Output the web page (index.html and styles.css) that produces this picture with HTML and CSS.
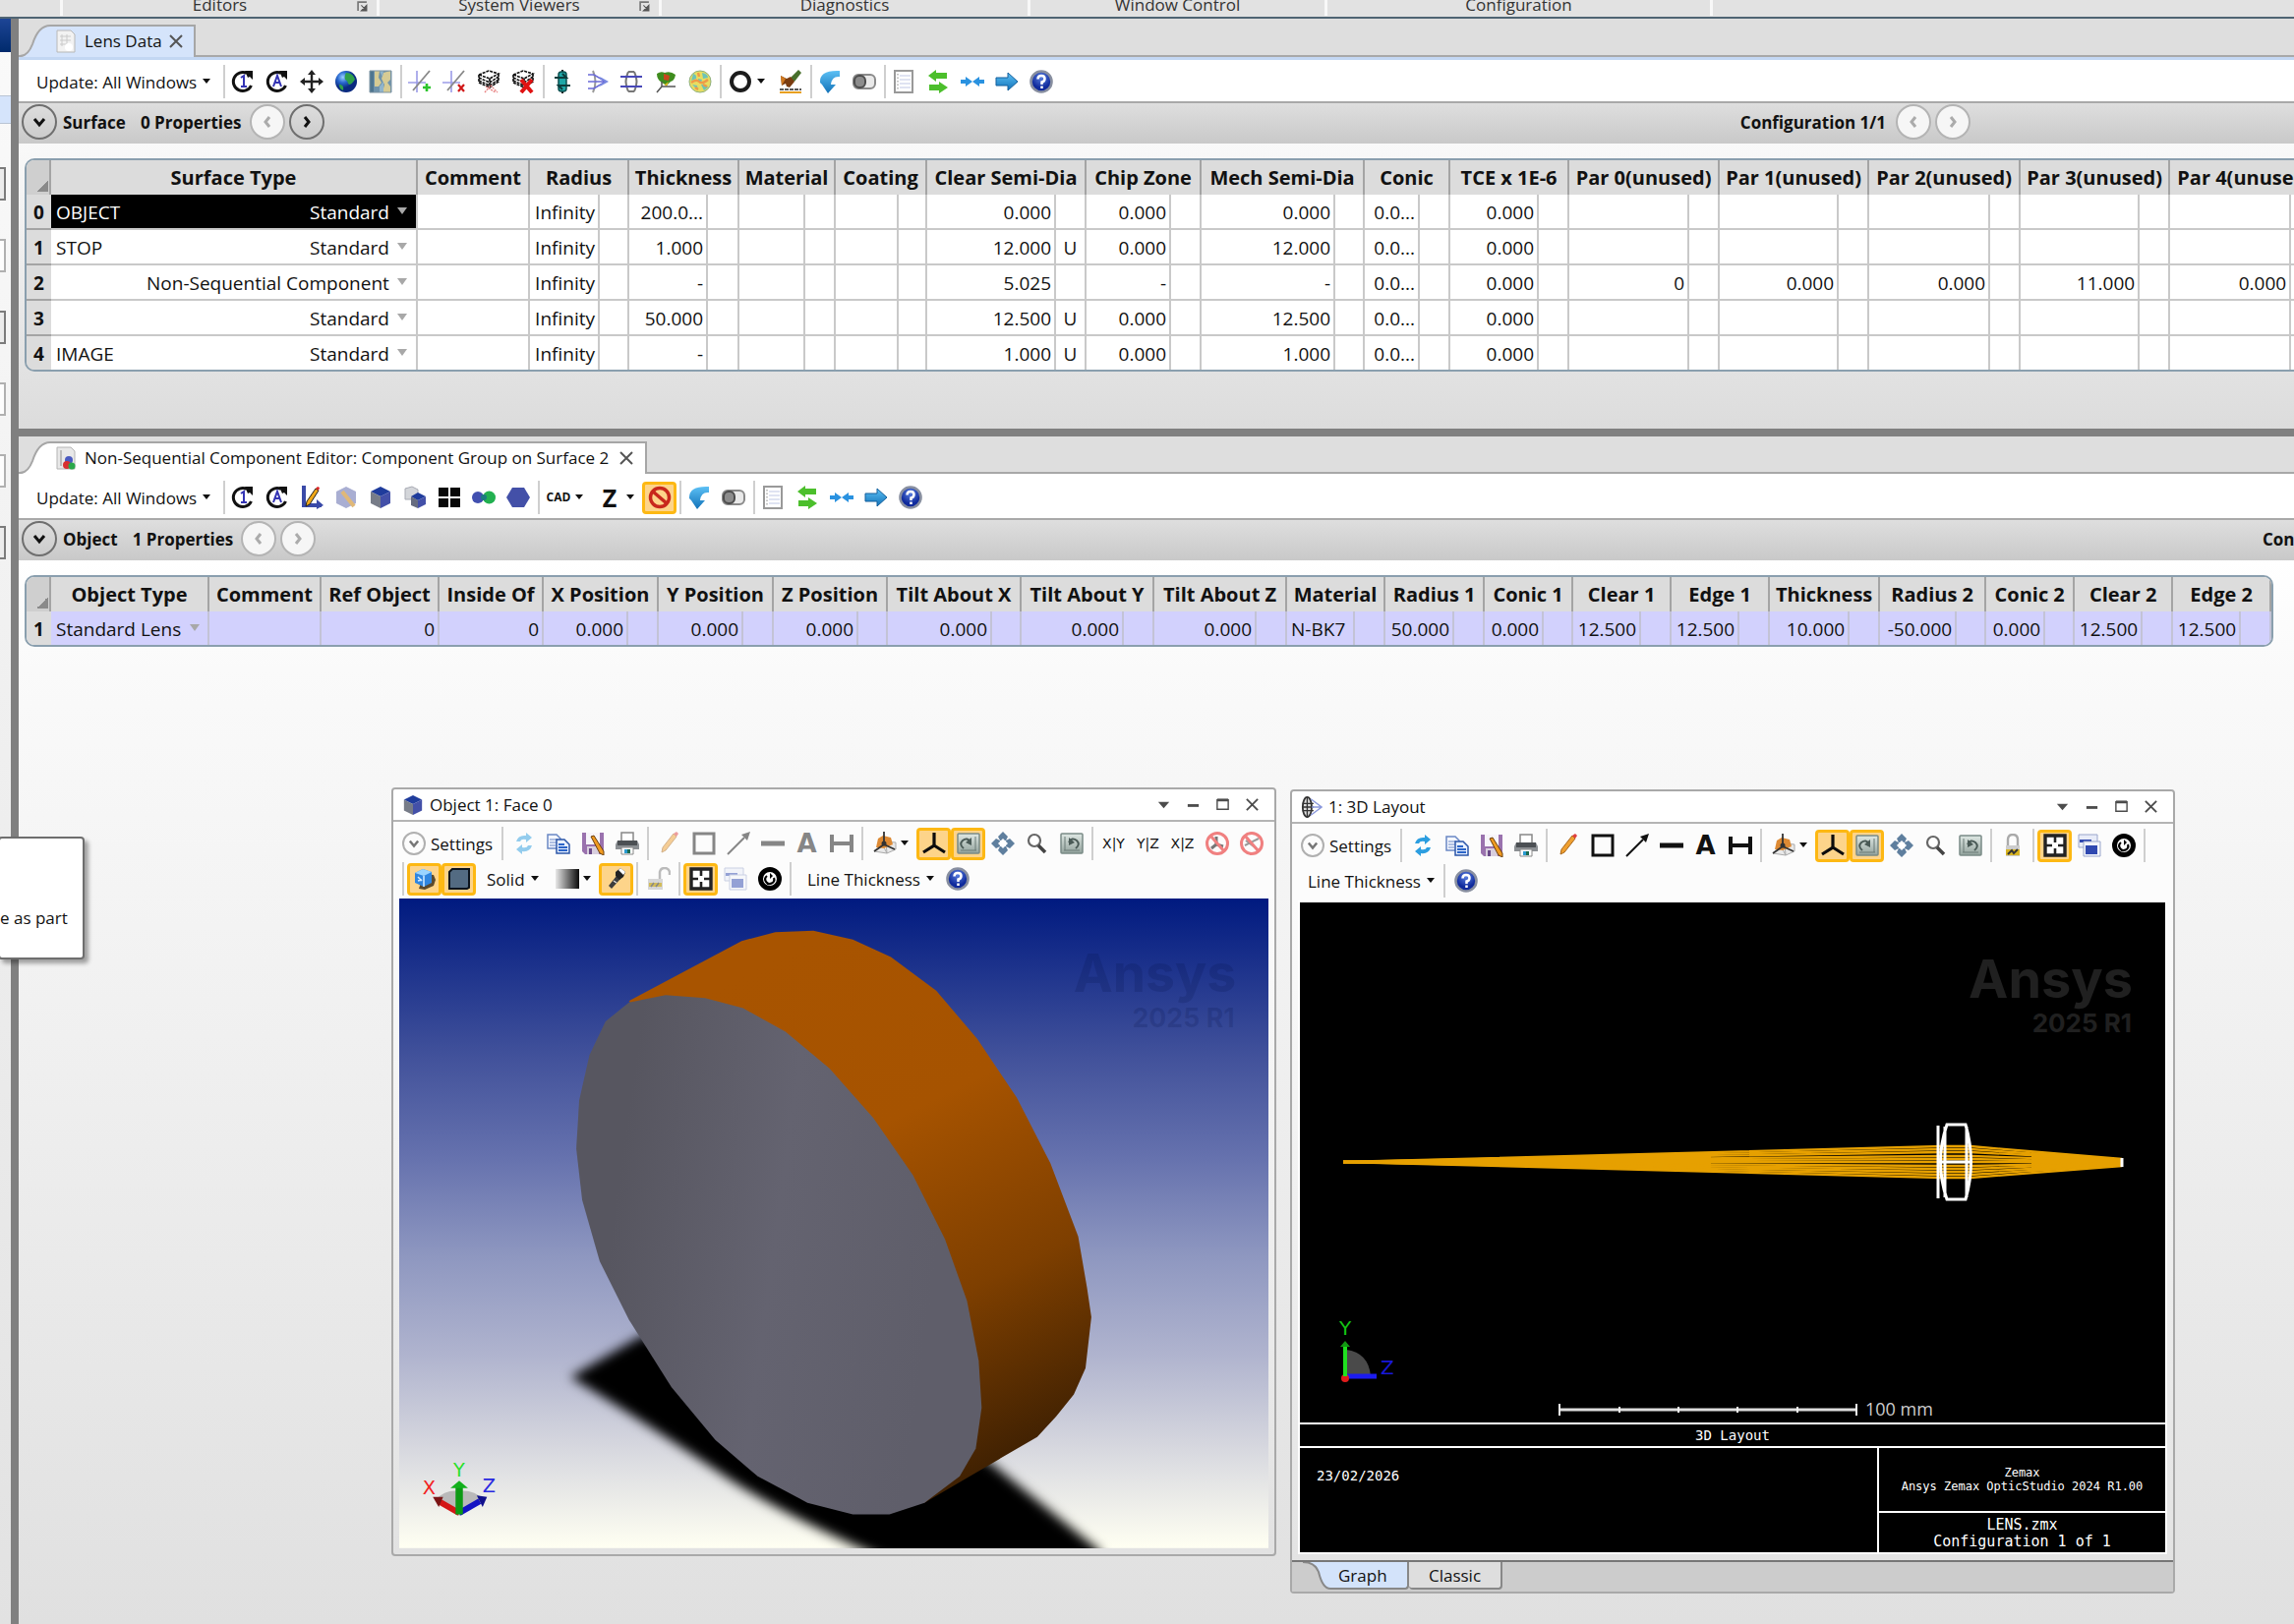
FILE: index.html
```html
<!DOCTYPE html>
<html lang="en">
<head>
<meta charset="utf-8">
<title>Lens Data</title>
<link rel="stylesheet" href="styles.css">
</head>
<body>
<svg class="defs" aria-hidden="true">
  <defs>
    <linearGradient id="g-blue" x1="0" y1="0" x2="0" y2="1"><stop offset="0" stop-color="#5cc0f5"/><stop offset="1" stop-color="#1272b8"/></linearGradient>
    <linearGradient id="g-bw"><stop offset="0" stop-color="#e8e8e8"/><stop offset="1" stop-color="#0a0a0a"/></linearGradient>
    <radialGradient id="g-globe" cx=".35" cy=".3"><stop offset="0" stop-color="#9ad0ff"/><stop offset=".5" stop-color="#2a6ad0"/><stop offset="1" stop-color="#0a2a80"/></radialGradient>
    <radialGradient id="g-help" cx=".5" cy=".3"><stop offset="0" stop-color="#5a80e0"/><stop offset="1" stop-color="#0f2a9c"/></radialGradient>
    <linearGradient id="g-screen" x1="0" y1="0" x2="0" y2="1"><stop offset="0" stop-color="#dfe8e4"/><stop offset="1" stop-color="#93a39d"/></linearGradient>
    <symbol id="update-one" viewBox="0 0 24 24"><path d="M16 3.500A9.500 9.500 0 1 0 20.500 16" fill="none" stroke="#111" stroke-width="3"/><path d="M14 1h8v9l-3-3-2 1z" fill="#111"/><path d="M10 8l3-2v11M10 17h6" fill="none" stroke="#3434b4" stroke-width="2"/></symbol>
    <symbol id="update-all" viewBox="0 0 24 24"><path d="M16 3.500A9.500 9.500 0 1 0 20.500 16" fill="none" stroke="#111" stroke-width="3"/><path d="M14 1h8v9l-3-3-2 1z" fill="#111"/><path d="M8 17l4-11 4 11M9.500 13h5" fill="none" stroke="#3434b4" stroke-width="2"/></symbol>
    <symbol id="move" viewBox="0 0 24 24"><path d="M12 2v20M2 12h20" stroke="#222" stroke-width="2.400"/><path d="M12 0l4 5H8zM12 24l4-5H8zM0 12l5-4v8zM24 12l-5-4v8z" fill="#222"/></symbol>
    <symbol id="globe" viewBox="0 0 24 24"><circle cx="12" cy="12" r="11" fill="url(#g-globe)"/><path d="M12 3c5 0 8 3 9 7-2 2-3 5-6 5-2-2-1-4-4-5-1-3 0-5 1-7zM5 15c3 0 5 2 4 6-3-1-4-3-4-6z" fill="#2fa04a"/></symbol>
    <symbol id="map" viewBox="0 0 24 24"><path d="M1 1h22v22H1z" fill="#6f93ac"/><path d="M1 1h4v22H1z" fill="#4f7690"/><path d="M6 1h5l-1 7 3 5-3 4H6zM15 3l7-2v9l-3 3 3 4v6h-8l2-8-3-6z" fill="#d6cb94"/><path d="M11 1h4l-1 6zM11 17l4-5v11h-4z" fill="#8fb4cc"/><path d="M1 1h22v22H1z" fill="none" stroke="#7d93a2"/></symbol>
    <symbol id="ray-add" viewBox="0 0 24 24"><path d="M0 13h18M9 1v22" stroke="#9c9ce8" stroke-width="1.600"/><path d="M22 1L5 21" stroke="#888" stroke-width="1.800"/><path d="M19 14v8M15 18h8" stroke="#2cc42c" stroke-width="2.600"/></symbol>
    <symbol id="ray-remove" viewBox="0 0 24 24"><path d="M0 13h18M9 1v22" stroke="#9c9ce8" stroke-width="1.600"/><path d="M22 1L5 21" stroke="#888" stroke-width="1.800"/><path d="M16 15l6 7M22 15l-6 7" stroke="#d01818" stroke-width="2.200"/></symbol>
    <symbol id="stack" viewBox="0 0 24 24"><path d="M2 5l10-4 10 3-9 5zM2 5v8l11 5 9-6V4M2 8l11 5 9-6M2 11l11 5 9-6M13 9v9" fill="#fff" stroke="#111" stroke-width="1.600" stroke-dasharray="3 1"/><path d="M8 23l6-7 7 7M9 17l10 6" fill="none" stroke="#e88080" stroke-width="1.300" stroke-dasharray="2 1"/></symbol>
    <symbol id="stack-del" viewBox="0 0 24 24"><path d="M2 5l10-4 10 3-9 5zM2 5v8l11 5 9-6V4M2 8l11 5 9-6M2 11l11 5 9-6M13 9v9" fill="#fff" stroke="#111" stroke-width="1.600" stroke-dasharray="3 1"/><path d="M10 10l11 13M21 10L10 23" stroke="#e01212" stroke-width="4"/></symbol>
    <symbol id="flip" viewBox="0 0 24 24"><path d="M12 0v24" stroke="#111" stroke-width="2"/><rect x="8" y="2" width="8" height="20" rx="3" fill="#1ea6a6" stroke="#0b4f4f" stroke-width="1.500"/><path d="M4 8h12l-4-4M20 16H8l4 4" fill="none" stroke="#0b3c3c" stroke-width="2"/></symbol>
    <symbol id="lens-one" viewBox="0 0 24 24"><path d="M8 1q5 11 0 22" fill="none" stroke="#999" stroke-width="2"/><path d="M3 5h6l12 7-12 7H3M3 12h18" fill="none" stroke="#6a6ad8" stroke-width="1.600"/><path d="M15 8l7 4-7 4" fill="none" stroke="#7a8ae0" stroke-width="2"/></symbol>
    <symbol id="lens-two" viewBox="0 0 24 24"><path d="M9 2q-5 10 0 20M15 2q5 10 0 20M9 2h6M9 22h6" fill="none" stroke="#777" stroke-width="2"/><path d="M1 7h22M1 17h22" stroke="#4848b8" stroke-width="1.800"/></symbol>
    <symbol id="terrain" viewBox="0 0 24 24"><path d="M3 4q4-3 8-1 6-2 11 2-1 6-5 7l-4 4-5-3q-5-3-5-9z" fill="#3f8c1e"/><path d="M10 4l6 2-1 5-5-1z" fill="#c8461c"/><path d="M7 12l4 3 4-3-2 5z" fill="#e0b820"/><path d="M3 23l5-6h14M8 12v5" fill="none" stroke="#555" stroke-width="1.500"/></symbol>
    <symbol id="heat" viewBox="0 0 24 24"><circle cx="12" cy="12" r="11" fill="#e8dd60" stroke="#8fb080"/><path d="M5 4q4 1 3 5l-5 2zM14 3q6 1 6 5l-5 1zM13 15q5-1 7 3l-4 3zM4 15l5 1 1 5zM10 9l4 1-1 3-3-1z" fill="#6cc4b8"/><path d="M3 13q5-4 8-1t9-2M10 3l1 4M15 15l4 2M7 18l3 2" fill="none" stroke="#ee9a48" stroke-width="2.400"/></symbol>
    <symbol id="ring" viewBox="0 0 24 24"><circle cx="12" cy="12" r="9" fill="none" stroke="#1c1c1c" stroke-width="4"/></symbol>
    <symbol id="brush" viewBox="0 0 24 24"><path d="M20 0l3 3-7 9-5-3z" fill="#48702c"/><path d="M2 6l6 3 4-2 4 5-5 6-3-1-1-3-4 2z" fill="#7a3c10"/><path d="M2 6l5 3-4 7z" fill="#d07a20"/><path d="M1 20h22" stroke="#222" stroke-width="1.500" stroke-dasharray="4 1"/><path d="M1 23h22" stroke="#e8a020" stroke-width="2"/></symbol>
    <symbol id="undo" viewBox="0 0 24 24"><path d="M22 1v6Q14 6 13 15h5l-8 9-6-9-2-2q-1-13 20-12z" fill="url(#g-blue)"/></symbol>
    <symbol id="toggle" viewBox="0 0 24 24"><rect x="1" y="5" width="22" height="14" rx="5" fill="#e9e9e9" stroke="#8a8a8a" stroke-width="2"/><rect x="2" y="6" width="11" height="12" rx="5" fill="#8c8c8c" stroke="#4c4c4c" stroke-width="2"/></symbol>
    <symbol id="sheet" viewBox="0 0 24 24"><path d="M3 1h18v22H3z" fill="#fff" stroke="#999" stroke-width="2"/><path d="M8 6h11M8 10h11M8 14h11M8 18h11" stroke="#d5daee" stroke-width="1.500"/><path d="M6 4v17" stroke="#888" stroke-dasharray="1.500 2"/></symbol>
    <symbol id="swap" viewBox="0 0 24 24"><path d="M10 0v3h11v6H10v3L2 6zM13 12v3H3v6h10v3l9-6z" fill="#4cbf2c"/></symbol>
    <symbol id="narrow" viewBox="0 0 24 24"><path d="M0 10h5V7l7 5-7 5v-3H0zM24 10h-5V7l-7 5 7 5v-3h5z" fill="#2a92e0"/></symbol>
    <symbol id="next" viewBox="0 0 24 24"><path d="M1 8h12V3l10 9-10 9v-5H1z" fill="url(#g-blue)" stroke="#125f9c"/></symbol>
    <symbol id="help" viewBox="0 0 24 24"><circle cx="12" cy="12" r="10.500" fill="url(#g-help)" stroke="#888fa0" stroke-width="2.600"/><path d="M8.500 9.500q0-3.500 3.500-3.500t3.500 3-3 3.500v2.500M12.500 16.500v2.500" fill="none" stroke="#fff" stroke-width="2.500"/></symbol>
    <symbol id="axis-edit" viewBox="0 0 24 24"><path d="M4 0v20h18" fill="none" stroke="#3a4aa8" stroke-width="4"/><path d="M17 14l7 6-7 4z" fill="#3a4aa8"/><path d="M16 3l3 2-9 14-4 2 1-5z" fill="#f0a818" stroke="#222"/><path d="M16 3l3 2 1-3-2-1z" fill="#d22"/></symbol>
    <symbol id="hex-edit" viewBox="0 0 24 24"><path d="M12 1l10 5v12l-10 5-10-5V6z" fill="#a9aed2"/><path d="M8 6l12 15" stroke="#e0b878" stroke-width="4"/></symbol>
    <symbol id="cube" viewBox="0 0 24 24"><path d="M12 1l10 5-10 5L2 6z" fill="#1f3c9c"/><path d="M2 6l10 5v12L2 18z" fill="#777c88"/><path d="M22 6l-10 5v12l10-5z" fill="#4350a8"/></symbol>
    <symbol id="cube-copy" viewBox="0 0 24 24"><path d="M2 3l7-2 6 3v10H2z" fill="#d4d6da" stroke="#a8abb4"/><path d="M15 7l8 4-8 4-7-4z" fill="#1f3c9c"/><path d="M8 11l7 4v8l-7-3z" fill="#666c80"/><path d="M23 11l-8 4v8l8-4z" fill="#4350a8"/></symbol>
    <symbol id="four" viewBox="0 0 24 24"><path d="M1 2h10v9H1zM13 2h10v9H13zM1 13h10v9H1zM13 13h10v9H13z" fill="#080808"/></symbol>
    <symbol id="two-dots" viewBox="0 0 24 24"><circle cx="6" cy="12" r="6" fill="#4150b0"/><circle cx="17.500" cy="12" r="6.500" fill="#22b050"/><circle cx="12" cy="12" r="3" fill="#1c7a80"/></symbol>
    <symbol id="hexagon" viewBox="0 0 24 24"><path d="M6 2h12l6 10-6 10H6L0 12z" fill="#4350a8"/></symbol>
    <symbol id="forbid" viewBox="0 0 24 24"><circle cx="12" cy="12" r="9.500" fill="none" stroke="#c8281c" stroke-width="3.500"/><path d="M5 6l14 12" stroke="#c8281c" stroke-width="3.500"/></symbol>
    <symbol id="refresh" viewBox="0 0 24 24"><path d="M4 10Q6 3 14 4V1l6 5-6 5V8q-5-1-6 2zM20 14q-2 7-10 6v3l-6-5 6-5v3q5 1 6-2z" fill="#2c9ee0"/></symbol>
    <symbol id="copy" viewBox="0 0 24 24"><path d="M1 3h9l4 4v10H1z" fill="#f4f7ff" stroke="#6a88c4" stroke-width="1.500"/><path d="M3 8h8M3 11h8M3 14h6" stroke="#6a88c4"/><path d="M10 8h8l5 5v9H10z" fill="#e8f0ff" stroke="#2b55a8" stroke-width="1.500"/><path d="M12 13h6M12 16h9M12 19h9" stroke="#2b65c8" stroke-width="1.800"/></symbol>
    <symbol id="save" viewBox="0 0 24 24"><path d="M1 1h22v22H4l-3-3z" fill="#9a72ae"/><path d="M5 1h14v12H5z" fill="#f7f5fa"/><path d="M6 15h12v8H6z" fill="#d8cede"/><path d="M8 17h3v6H8z" fill="#6a4a88"/><path d="M10 5l3-1 10 16v4l-4-2z" fill="#f09a20" stroke="#6a4010"/></symbol>
    <symbol id="print" viewBox="0 0 24 24"><path d="M6 1h12v9H6z" fill="#fff" stroke="#888" stroke-width="1.500"/><path d="M2 9h20l2 4v5H0v-5z" fill="#8c9094"/><path d="M2 9h20v5H2z" fill="#4c5054"/><path d="M6 16h12v7H6z" fill="#fff" stroke="#888"/><path d="M9 18h3v4H9z" fill="#2a9ad0"/><path d="M12 18h3v4h-3z" fill="#1c6a50"/></symbol>
    <symbol id="pencil" viewBox="0 0 24 24"><path d="M16 2l3 3L8 19l-4 2 1-5z" fill="#f0a030" stroke="#a8671c"/><path d="M16 2l3 3 2-3-2-2z" fill="#e04040"/></symbol>
    <symbol id="rect" viewBox="0 0 24 24"><path d="M2 2h20v20H2z" fill="none" stroke="currentColor" stroke-width="3"/></symbol>
    <symbol id="arrow" viewBox="0 0 24 24"><path d="M1 23L18 6" stroke="currentColor" stroke-width="2"/><path d="M24 0l-3 9-6-6z" fill="currentColor"/></symbol>
    <symbol id="line" viewBox="0 0 24 24"><path d="M0 12h24" stroke="currentColor" stroke-width="5"/></symbol>
    <symbol id="span" viewBox="0 0 24 24"><path d="M2 3v18M22 3v18M2 12h20" fill="none" stroke="currentColor" stroke-width="4"/></symbol>
    <symbol id="planes" viewBox="0 0 24 24"><path d="M1 20l9-6 4 8zM13 10l10 1v7l-9 4z" fill="#e9e9e9" stroke="#aaa"/><path d="M5 7l5-3 8 2 2 7-9 4-8-1z" fill="#dd8a34"/><path d="M11 0v13L1 20M11 13l11 5" fill="none" stroke="#333" stroke-width="1.800"/><circle cx="11" cy="12" r="2.500" fill="#333"/></symbol>
    <symbol id="tripod" viewBox="0 0 24 24"><path d="M12 1v13L1 21M12 14l11 7" fill="none" stroke="#0c0c0c" stroke-width="3.200"/></symbol>
    <symbol id="rotate" viewBox="0 0 24 24"><rect x="1" y="2" width="22" height="20" rx="1" fill="url(#g-screen)" stroke="#7a8a86" stroke-width="1.500"/><path d="M7 17Q2 13 6 9q5-4 8 2" fill="none" stroke="#4a5a56" stroke-width="2"/><path d="M15 6v8l-6-3z" fill="#4a5a56"/><path d="M19 5v14M4 19h16" fill="none" stroke="#6a7a76"/></symbol>
    <symbol id="reset" viewBox="0 0 24 24"><rect x="1" y="2" width="22" height="20" rx="1" fill="url(#g-screen)" stroke="#7a8a86" stroke-width="1.500"/><path d="M16 17q5-4 1-8-5-4-8 2" fill="none" stroke="#4a5a56" stroke-width="2"/><path d="M9 6v8l6-3z" fill="#4a5a56"/><path d="M5 5v14M4 19h16" fill="none" stroke="#6a7a76"/></symbol>
    <symbol id="pan" viewBox="0 0 24 24"><path d="M12 0l5 5-2 4H9L7 5zM12 24l5-5-2-4H9l-2 4zM0 12l5-5 4 2v6l-4 2zM24 12l-5-5-4 2v6l4 2z" fill="#5f7f9e"/><path d="M12 7l5 5-5 5-5-5z" fill="#fff"/></symbol>
    <symbol id="magnify" viewBox="0 0 24 24"><circle cx="9" cy="9" r="6" fill="#fff" stroke="#666" stroke-width="2.200"/><path d="M13 14l7 7" stroke="#444" stroke-width="3.600"/></symbol>
    <symbol id="no-axis" viewBox="0 0 24 24"><path d="M11 5v8l-5 4M11 13l7 2" fill="none" stroke="#777" stroke-width="3"/><circle cx="12" cy="12" r="10.500" fill="none" stroke="#f08080" stroke-width="3"/><path d="M5 4l14 16" stroke="#f08080" stroke-width="3"/></symbol>
    <symbol id="no-ray" viewBox="0 0 24 24"><path d="M5 14l14-7M6 9l12 9" fill="none" stroke="#999" stroke-width="2"/><circle cx="12" cy="12" r="10.500" fill="none" stroke="#f08080" stroke-width="3"/><path d="M5 4l14 16" stroke="#f08080" stroke-width="3"/></symbol>
    <symbol id="box3d" viewBox="0 0 24 24"><path d="M11 7l10 1 2 5-2 6-9 4-6-1z" fill="#5c4a2c"/><path d="M10 2l9 3v11l-8 4-9-4V6z" fill="#2f86e0"/><path d="M10 2l9 3-8 4-9-3z" fill="#9ad4ff"/><path d="M11 9v11M5 10l4 4M5 14l4-1" stroke="#d4ecff" stroke-width="1.500"/></symbol>
    <symbol id="face" viewBox="0 0 24 24"><path d="M5 2h17v19l-2 1H2V5z" fill="#536b82" stroke="#0c141c" stroke-width="2"/></symbol>
    <symbol id="gradient" viewBox="0 0 24 24"><path d="M0 2h24v20H0z" fill="url(#g-bw)"/></symbol>
    <symbol id="torch" viewBox="0 0 24 24"><path d="M12 9l4 3-9 10-3-3z" fill="#3c3c3c"/><path d="M11 5l5-4 5 4-2 5-4 3-4-4z" fill="#222"/><path d="M14 3l2-2 5 4-2 3z" fill="#fff"/><path d="M9 14l3 2" stroke="#ddd" stroke-width="1.500"/></symbol>
    <symbol id="lock-open" viewBox="0 0 24 24"><path d="M13 12V5q1-4 5-4t5 4v3" fill="none" stroke="#bbb" stroke-width="2.500"/><path d="M1 12h15v11H1z" fill="#d6d6d6"/><path d="M2 16h13v4H2z" fill="#d2bc58"/><path d="M4 20l3-4M9 20l3-4" stroke="#888" stroke-width="1.500"/></symbol>
    <symbol id="lock" viewBox="0 0 24 24"><path d="M7 13V6q0-5 5-5t5 5v7" fill="none" stroke="#aaa" stroke-width="2.400"/><path d="M5 12h14v11H5z" fill="#ccc"/><path d="M5 16h14v6H5z" fill="#d8b422"/><path d="M7 21l4-4 2 3 4-4" fill="none" stroke="#333" stroke-width="2"/></symbol>
    <symbol id="fit" viewBox="0 0 24 24"><path d="M2 2h20v20H2z" fill="#fff" stroke="#222" stroke-width="3.400"/><path d="M12 3v6M12 15v6M3 12h6M15 12h6" stroke="#222" stroke-width="2.600"/></symbol>
    <symbol id="cascade" viewBox="0 0 24 24"><path d="M1 1h19v13H1z" fill="#e8ecf8" stroke="#9aa6cc"/><path d="M2 6h12v3H2z" fill="#2f48b0"/><path d="M6 8h17v15H6z" fill="#f2f4fa" stroke="#9aa6cc"/><path d="M8 12h12v9H8z" fill="#2f48b0"/></symbol>
    <symbol id="target" viewBox="0 0 24 24"><circle cx="12" cy="12" r="9.500" fill="#fff" stroke="#000" stroke-width="5"/><path d="M9 9a4.500 4.500 0 1 0 7 2" fill="none" stroke="#000" stroke-width="2.200"/><path d="M12 6l3 3-3 3z" fill="#000"/></symbol>
    <symbol id="lens-wire" viewBox="0 0 24 24"><ellipse cx="7" cy="12" rx="5" ry="11" fill="#ddd" stroke="#333" stroke-width="2"/><path d="M7 1v22M2 8h12M2 16h12M2 12h12" stroke="#333" stroke-width="1.500"/><path d="M11 3l12 9-12 9M12 12h11" fill="none" stroke="#8a98dc" stroke-width="1.500"/></symbol>
    <symbol id="down" viewBox="0 0 10 10"><path d="M1 2h8L5 7z" fill="currentColor"/></symbol>
    <symbol id="chev-d" viewBox="0 0 24 24"><path d="M7 9l5 6 5-6" fill="none" stroke="currentColor" stroke-width="3"/></symbol>
    <symbol id="chev-l" viewBox="0 0 24 24"><path d="M14 7l-4 5 4 5" fill="none" stroke="currentColor" stroke-width="3"/></symbol>
    <symbol id="chev-r" viewBox="0 0 24 24"><path d="M10 7l4 5-4 5" fill="none" stroke="currentColor" stroke-width="3"/></symbol>
    <symbol id="close" viewBox="0 0 16 16"><path d="M2 2l12 12M14 2L2 14" stroke="currentColor" stroke-width="2"/></symbol>
    <symbol id="menu-down" viewBox="0 0 16 16"><path d="M2 5h12l-6 7z" fill="currentColor"/></symbol>
    <symbol id="minimize" viewBox="0 0 16 16"><path d="M2 9h12" stroke="currentColor" stroke-width="3"/></symbol>
    <symbol id="maximize" viewBox="0 0 16 16"><path d="M2 3h12v10H2z" fill="none" stroke="currentColor" stroke-width="1.500"/><path d="M2 3h12" stroke="currentColor" stroke-width="3"/></symbol>
    <symbol id="launcher" viewBox="0 0 10 10"><path d="M1 9V1h8" fill="none" stroke="#777" stroke-width="1.500"/><path d="M9 4v5H4zM4 4l4 4" fill="#555" stroke="#555"/></symbol>
    <symbol id="doc-grid" viewBox="0 0 20 24"><path d="M1 1h14l4 4v18H1z" fill="#f2f2f2" stroke="#b8b8b8"/><path d="M4 7h11M4 11h11M4 15h7M6 5v12M11 5v12" stroke="#cacaca"/><circle cx="13" cy="18" r="4" fill="#fff"/></symbol>
    <symbol id="doc-nsc" viewBox="0 0 20 24"><path d="M1 1h14l4 4v18H1z" fill="#e8e8e8" stroke="#b4b4b4"/><path d="M5 4v16" stroke="#bbb" stroke-width="2"/><circle cx="13" cy="14" r="4" fill="#4a5ac0"/><circle cx="11" cy="19" r="4" fill="#d83030"/><circle cx="16" cy="20" r="3.500" fill="#2aa84a"/></symbol>
  </defs>
</svg>

<header class="ribbon">
  <div class="ribbon-group ribbon-start"></div>
  <div class="ribbon-group ribbon-editors">Editors<svg class="launcher"><use href="#launcher"/></svg></div>
  <div class="ribbon-group ribbon-viewers">System Viewers<svg class="launcher"><use href="#launcher"/></svg></div>
  <div class="ribbon-group ribbon-diagnostics">Diagnostics</div>
  <div class="ribbon-group ribbon-window">Window Control</div>
  <div class="ribbon-group ribbon-config">Configuration</div>
</header>

<div class="workspace">
  <aside class="explorer">
    <div class="explorer-title"></div>
    <div class="explorer-row"></div>
    <div class="explorer-fields">
      <div class="field field-dark"></div><div class="field"></div><div class="field field-dark"></div><div class="field"></div><div class="field"></div><div class="field field-dark"></div>
    </div>
    <div class="tooltip" role="tooltip">e as part</div>
  </aside>

  <main class="editors">
    <section class="editor editor-lens">
      <div class="tabstrip">
        <div class="tab tab-active">
          <svg class="tab-edge" viewBox="0 0 32 33"><path d="M0 33Q10 33 15 19Q20 1 32 1V33z" fill="#d5e4fb"/><path d="M0 32Q9 33 14 20Q20 1 32 1" fill="none" stroke="#a6a6a6" stroke-width="2"/></svg>
          <div class="tab-body"><svg class="tab-icon"><use href="#doc-grid"/></svg><span>Lens Data</span><button class="tab-close" aria-label="Close"><svg><use href="#close"/></svg></button></div>
        </div>
      </div>
      <div class="toolbar">
        <button class="update">Update: All Windows<svg class="caret"><use href="#down"/></svg></button>
        <i class="sep"></i>
        <button class="tb" aria-label="Update"><svg><use href="#update-one"/></svg></button>
        <button class="tb" aria-label="Update all"><svg><use href="#update-all"/></svg></button>
        <button class="tb" aria-label="Move"><svg><use href="#move"/></svg></button>
        <button class="tb" aria-label="Globe"><svg><use href="#globe"/></svg></button>
        <button class="tb" aria-label="Map"><svg><use href="#map"/></svg></button>
        <i class="sep"></i>
        <button class="tb" aria-label="Add break"><svg><use href="#ray-add"/></svg></button>
        <button class="tb" aria-label="Remove break"><svg><use href="#ray-remove"/></svg></button>
        <button class="tb" aria-label="Add coatings"><svg><use href="#stack"/></svg></button>
        <button class="tb" aria-label="Delete coatings"><svg><use href="#stack-del"/></svg></button>
        <i class="sep"></i>
        <button class="tb" aria-label="Reverse"><svg><use href="#flip"/></svg></button>
        <button class="tb" aria-label="Focus"><svg><use href="#lens-one"/></svg></button>
        <button class="tb" aria-label="Afocal"><svg><use href="#lens-two"/></svg></button>
        <button class="tb" aria-label="Surface sag"><svg><use href="#terrain"/></svg></button>
        <button class="tb" aria-label="Phase"><svg><use href="#heat"/></svg></button>
        <i class="sep"></i>
        <button class="tb tb-menu" aria-label="Aperture"><svg><use href="#ring"/></svg><svg class="caret"><use href="#down"/></svg></button>
        <button class="tb" aria-label="Clean"><svg><use href="#brush"/></svg></button>
        <i class="sep"></i>
        <button class="tb" aria-label="Undo"><svg><use href="#undo"/></svg></button>
        <button class="tb" aria-label="Toggle"><svg><use href="#toggle"/></svg></button>
        <i class="sep"></i>
        <button class="tb" aria-label="Sheet"><svg><use href="#sheet"/></svg></button>
        <button class="tb" aria-label="Swap"><svg><use href="#swap"/></svg></button>
        <button class="tb" aria-label="Fit columns"><svg><use href="#narrow"/></svg></button>
        <button class="tb" aria-label="Go to"><svg><use href="#next"/></svg></button>
        <button class="tb" aria-label="Help"><svg><use href="#help"/></svg></button>
      </div>
      <div class="propbar">
        <button class="round" aria-label="Expand"><svg><use href="#chev-d"/></svg></button>
        <span class="prop-kind">Surface</span><span class="prop-name">0 Properties</span>
        <button class="round" aria-label="Previous" disabled><svg><use href="#chev-l"/></svg></button>
        <button class="round" aria-label="Next"><svg><use href="#chev-r"/></svg></button>
        <div class="config"><span>Configuration 1/1</span>
          <button class="round" aria-label="Previous configuration" disabled><svg><use href="#chev-l"/></svg></button>
          <button class="round" aria-label="Next configuration" disabled><svg><use href="#chev-r"/></svg></button>
        </div>
      </div>
      <div class="grid-area">
        <div class="frame frame-cut">
        <table class="grid grid-lens">
          <colgroup>
            <col style="width:25px"><col style="width:373px"><col style="width:114px"><col style="width:71px"><col style="width:30px"><col style="width:80px"><col style="width:32px"><col style="width:67px"><col style="width:31px"><col style="width:64px"><col style="width:29px"><col style="width:131px"><col style="width:31px"><col style="width:86px"><col style="width:31px"><col style="width:136px"><col style="width:30px"><col style="width:56px"><col style="width:31px"><col style="width:90px"><col style="width:31px"><col style="width:122px"><col style="width:31px"><col style="width:121px"><col style="width:31px"><col style="width:123px"><col style="width:31px"><col style="width:121px"><col style="width:31px"><col style="width:123px"><col style="width:31px">
          </colgroup>
          <thead><tr><th class="corner"></th><th>Surface Type</th><th>Comment</th><th colspan="2">Radius</th><th colspan="2">Thickness</th><th colspan="2">Material</th><th colspan="2">Coating</th><th colspan="2">Clear Semi-Dia</th><th colspan="2">Chip Zone</th><th colspan="2">Mech Semi-Dia</th><th colspan="2">Conic</th><th colspan="2">TCE x 1E-6</th><th colspan="2">Par 0(unused)</th><th colspan="2">Par 1(unused)</th><th colspan="2">Par 2(unused)</th><th colspan="2">Par 3(unused)</th><th colspan="2">Par 4(unused)</th></tr></thead>
          <tbody>
            <tr><th>0</th><td class="type selected"><div><span>OBJECT</span><span class="pick"><select aria-label="Surface 0 type"><option>Standard</option></select></span></div></td><td></td><td>Infinity</td><td></td><td>200.0...</td><td></td><td></td><td></td><td></td><td></td><td>0.000</td><td></td><td>0.000</td><td></td><td>0.000</td><td></td><td>0.0...</td><td></td><td>0.000</td><td></td><td></td><td></td><td></td><td></td><td></td><td></td><td></td><td></td><td></td><td></td></tr>
            <tr><th>1</th><td class="type"><div><span>STOP</span><span class="pick"><select aria-label="Surface 1 type"><option>Standard</option></select></span></div></td><td></td><td>Infinity</td><td></td><td>1.000</td><td></td><td></td><td></td><td></td><td></td><td>12.000</td><td class="solve">U</td><td>0.000</td><td></td><td>12.000</td><td></td><td>0.0...</td><td></td><td>0.000</td><td></td><td></td><td></td><td></td><td></td><td></td><td></td><td></td><td></td><td></td><td></td></tr>
            <tr><th>2</th><td class="type"><div><span></span><span class="pick"><select aria-label="Surface 2 type"><option>Non-Sequential Component</option></select></span></div></td><td></td><td>Infinity</td><td></td><td>-</td><td></td><td></td><td></td><td></td><td></td><td>5.025</td><td></td><td>-</td><td></td><td>-</td><td></td><td>0.0...</td><td></td><td>0.000</td><td></td><td>0</td><td></td><td>0.000</td><td></td><td>0.000</td><td></td><td>11.000</td><td></td><td>0.000</td><td></td></tr>
            <tr><th>3</th><td class="type"><div><span></span><span class="pick"><select aria-label="Surface 3 type"><option>Standard</option></select></span></div></td><td></td><td>Infinity</td><td></td><td>50.000</td><td></td><td></td><td></td><td></td><td></td><td>12.500</td><td class="solve">U</td><td>0.000</td><td></td><td>12.500</td><td></td><td>0.0...</td><td></td><td>0.000</td><td></td><td></td><td></td><td></td><td></td><td></td><td></td><td></td><td></td><td></td><td></td></tr>
            <tr><th>4</th><td class="type"><div><span>IMAGE</span><span class="pick"><select aria-label="Surface 4 type"><option>Standard</option></select></span></div></td><td></td><td>Infinity</td><td></td><td>-</td><td></td><td></td><td></td><td></td><td></td><td>1.000</td><td class="solve">U</td><td>0.000</td><td></td><td>1.000</td><td></td><td>0.0...</td><td></td><td>0.000</td><td></td><td></td><td></td><td></td><td></td><td></td><td></td><td></td><td></td><td></td><td></td></tr>
          </tbody>
        </table>
        </div>
      </div>
    </section>

    <section class="editor editor-nsc">
      <div class="tabstrip">
        <div class="tab">
          <svg class="tab-edge" viewBox="0 0 32 33"><path d="M0 33Q10 33 15 19Q20 1 32 1V33z" fill="#fff"/><path d="M0 32Q9 33 14 20Q20 1 32 1" fill="none" stroke="#a6a6a6" stroke-width="2"/></svg>
          <div class="tab-body"><svg class="tab-icon"><use href="#doc-nsc"/></svg><span>Non-Sequential Component Editor: Component Group on Surface 2</span><button class="tab-close" aria-label="Close"><svg><use href="#close"/></svg></button></div>
        </div>
      </div>
      <div class="toolbar">
        <button class="update">Update: All Windows<svg class="caret"><use href="#down"/></svg></button>
        <i class="sep"></i>
        <button class="tb" aria-label="Update"><svg><use href="#update-one"/></svg></button>
        <button class="tb" aria-label="Update all"><svg><use href="#update-all"/></svg></button>
        <button class="tb" aria-label="Edit axes"><svg><use href="#axis-edit"/></svg></button>
        <button class="tb" aria-label="Edit object"><svg><use href="#hex-edit"/></svg></button>
        <button class="tb" aria-label="Object"><svg><use href="#cube"/></svg></button>
        <button class="tb" aria-label="Copy object"><svg><use href="#cube-copy"/></svg></button>
        <button class="tb" aria-label="Tile"><svg><use href="#four"/></svg></button>
        <button class="tb" aria-label="Combine"><svg><use href="#two-dots"/></svg></button>
        <button class="tb" aria-label="Polygon"><svg><use href="#hexagon"/></svg></button>
        <i class="sep"></i>
        <button class="tb tb-menu"><span class="glyph-cad">CAD</span><svg class="caret"><use href="#down"/></svg></button>
        <button class="tb tb-menu"><span class="glyph-z">Z</span><svg class="caret"><use href="#down"/></svg></button>
        <button class="tb on" aria-label="Ignore"><svg><use href="#forbid"/></svg></button>
        <i class="sep"></i>
        <button class="tb" aria-label="Undo"><svg><use href="#undo"/></svg></button>
        <button class="tb" aria-label="Toggle"><svg><use href="#toggle"/></svg></button>
        <i class="sep"></i>
        <button class="tb" aria-label="Sheet"><svg><use href="#sheet"/></svg></button>
        <button class="tb" aria-label="Swap"><svg><use href="#swap"/></svg></button>
        <button class="tb" aria-label="Fit columns"><svg><use href="#narrow"/></svg></button>
        <button class="tb" aria-label="Go to"><svg><use href="#next"/></svg></button>
        <button class="tb" aria-label="Help"><svg><use href="#help"/></svg></button>
      </div>
      <div class="propbar">
        <button class="round" aria-label="Expand"><svg><use href="#chev-d"/></svg></button>
        <span class="prop-kind">Object</span><span class="prop-name">1 Properties</span>
        <button class="round" aria-label="Previous" disabled><svg><use href="#chev-l"/></svg></button>
        <button class="round" aria-label="Next" disabled><svg><use href="#chev-r"/></svg></button>
        <div class="config config-cut"><span>Configuration 1/1</span></div>
      </div>
      <div class="grid-area canvas">
        <div class="frame">
        <table class="grid grid-nsc">
          <colgroup>
            <col style="width:25px"><col style="width:161px"><col style="width:114px"><col style="width:120px"><col style="width:106px"><col style="width:86px"><col style="width:31px"><col style="width:86px"><col style="width:31px"><col style="width:86px"><col style="width:30px"><col style="width:106px"><col style="width:30px"><col style="width:104px"><col style="width:31px"><col style="width:104px"><col style="width:31px"><col style="width:69px"><col style="width:31px"><col style="width:70px"><col style="width:31px"><col style="width:60px"><col style="width:30px"><col style="width:69px"><col style="width:31px"><col style="width:69px"><col style="width:31px"><col style="width:81px"><col style="width:31px"><col style="width:78px"><col style="width:30px"><col style="width:60px"><col style="width:30px"><col style="width:69px"><col style="width:31px"><col style="width:69px"><col style="width:31px">
          </colgroup>
          <thead><tr><th class="corner"></th><th>Object Type</th><th>Comment</th><th>Ref Object</th><th>Inside Of</th><th colspan="2">X Position</th><th colspan="2">Y Position</th><th colspan="2">Z Position</th><th colspan="2">Tilt About X</th><th colspan="2">Tilt About Y</th><th colspan="2">Tilt About Z</th><th colspan="2">Material</th><th colspan="2">Radius 1</th><th colspan="2">Conic 1</th><th colspan="2">Clear 1</th><th colspan="2">Edge 1</th><th colspan="2">Thickness</th><th colspan="2">Radius 2</th><th colspan="2">Conic 2</th><th colspan="2">Clear 2</th><th colspan="2">Edge 2</th></tr></thead>
          <tbody>
            <tr><th>1</th><td class="type"><div><span class="pick"><select aria-label="Object 1 type"><option>Standard Lens</option></select></span></div></td><td></td><td>0</td><td>0</td><td>0.000</td><td></td><td>0.000</td><td></td><td>0.000</td><td></td><td>0.000</td><td></td><td>0.000</td><td></td><td>0.000</td><td></td><td class="word">N-BK7</td><td></td><td>50.000</td><td></td><td>0.000</td><td></td><td>12.500</td><td></td><td>12.500</td><td></td><td>10.000</td><td></td><td>-50.000</td><td></td><td>0.000</td><td></td><td>12.500</td><td></td><td>12.500</td><td></td></tr>
          </tbody>
        </table>
        </div>

        <section class="window window-object">
          <div class="titlebar"><svg class="title-icon"><use href="#cube"/></svg><h2>Object 1: Face 0</h2>
            <button aria-label="Menu"><svg><use href="#menu-down"/></svg></button><button aria-label="Minimize"><svg><use href="#minimize"/></svg></button><button aria-label="Maximize"><svg><use href="#maximize"/></svg></button><button aria-label="Close"><svg><use href="#close"/></svg></button></div>
          <div class="wintools">
            <div class="row">
              <button class="settings"><svg class="ring"><use href="#chev-d"/></svg>Settings</button>
              <i class="sep"></i>
              <button class="tb dim" aria-label="Refresh"><svg><use href="#refresh"/></svg></button>
              <button class="tb" aria-label="Copy"><svg><use href="#copy"/></svg></button>
              <button class="tb" aria-label="Save"><svg><use href="#save"/></svg></button>
              <button class="tb" aria-label="Print"><svg><use href="#print"/></svg></button>
              <i class="sep"></i>
              <button class="tb dim" aria-label="Draw"><svg><use href="#pencil"/></svg></button>
              <button class="tb gray" aria-label="Box"><svg><use href="#rect"/></svg></button>
              <button class="tb gray" aria-label="Arrow"><svg><use href="#arrow"/></svg></button>
              <button class="tb gray" aria-label="Line"><svg><use href="#line"/></svg></button>
              <button class="tb gray"><span class="glyph-a">A</span></button>
              <button class="tb gray" aria-label="Dimension"><svg><use href="#span"/></svg></button>
              <i class="sep"></i>
              <button class="tb tb-menu" aria-label="View"><svg><use href="#planes"/></svg><svg class="caret"><use href="#down"/></svg></button>
              <button class="tb on" aria-label="Axes"><svg><use href="#tripod"/></svg></button>
              <button class="tb on" aria-label="Rotate"><svg><use href="#rotate"/></svg></button>
              <button class="tb" aria-label="Pan"><svg><use href="#pan"/></svg></button>
              <button class="tb" aria-label="Zoom"><svg><use href="#magnify"/></svg></button>
              <button class="tb" aria-label="Reset"><svg><use href="#reset"/></svg></button>
              <i class="sep"></i>
              <button class="tb"><span class="glyph-xy">X|Y</span></button>
              <button class="tb"><span class="glyph-xy">Y|Z</span></button>
              <button class="tb"><span class="glyph-xy">X|Z</span></button>
              <button class="tb" aria-label="Hide axes"><svg><use href="#no-axis"/></svg></button>
              <button class="tb" aria-label="Hide rays"><svg><use href="#no-ray"/></svg></button>
            </div>
            <div class="row row-second">
              <i class="sep"></i>
              <button class="tb on" aria-label="Shaded"><svg><use href="#box3d"/></svg></button>
              <button class="tb on" aria-label="Face"><svg><use href="#face"/></svg></button>
              <button class="textmenu solid">Solid<svg class="caret"><use href="#down"/></svg></button>
              <button class="tb tb-menu" aria-label="Background"><svg><use href="#gradient"/></svg><svg class="caret"><use href="#down"/></svg></button>
              <button class="tb on" aria-label="Light"><svg><use href="#torch"/></svg></button>
              <i class="sep"></i>
              <button class="tb" aria-label="Lock"><svg><use href="#lock-open"/></svg></button>
              <i class="sep"></i>
              <button class="tb on" aria-label="Fit"><svg><use href="#fit"/></svg></button>
              <button class="tb dim" aria-label="Cascade"><svg><use href="#cascade"/></svg></button>
              <button class="tb" aria-label="Target"><svg><use href="#target"/></svg></button>
              <i class="sep"></i>
              <button class="textmenu">Line Thickness<svg class="caret"><use href="#down"/></svg></button>
              <button class="tb" aria-label="Help"><svg><use href="#help"/></svg></button>
            </div>
          </div>
          <svg class="view3d" viewBox="273 614 594 444">
            <defs>
              <linearGradient id="sky" x1="0" y1="0" x2="0" y2="1"><stop offset="0" stop-color="#001a80"/><stop offset=".245" stop-color="#42529b"/><stop offset=".4" stop-color="#6672ae"/><stop offset=".55" stop-color="#8e97c0"/><stop offset=".7" stop-color="#afb3ce"/><stop offset=".84" stop-color="#d5d6de"/><stop offset="1" stop-color="#fffff2"/></linearGradient>
              <linearGradient id="rim" gradientUnits="userSpaceOnUse" x1="560" y1="640" x2="730" y2="985"><stop offset="0" stop-color="#a85400"/><stop offset=".35" stop-color="#a65300"/><stop offset=".68" stop-color="#7e3f00"/><stop offset="1" stop-color="#3c1f02"/></linearGradient>
              <linearGradient id="glass" gradientUnits="userSpaceOnUse" x1="420" y1="830" x2="640" y2="860"><stop offset="0" stop-color="#575660"/><stop offset=".5" stop-color="#646370"/><stop offset="1" stop-color="#5f5e6a"/></linearGradient>
              <filter id="soft" x="-10%" y="-20%" width="120%" height="140%"><feGaussianBlur stdDeviation="4"/></filter>
            </defs>
            <rect x="273" y="614" width="594" height="444" fill="url(#sky)"/>
            <path d="M390 941L440 912L560 960L675 998L752 1060V1080H640Q540 1040 490 1005Q430 965 390 941z" fill="#000" filter="url(#soft)"/>
            <path d="M430 684L507 643L530 637L556 636L583 642L609 654L640 677L668 710L695 750L718 795L737 845L743 880L746 900L742 935L734 953L722 968L709 982L632 1027L583 900z" fill="url(#rim)"/>
            <path d="M394 785L396 752L403 721L414 698L430 685L455 680L482 682L508 689L537 705L567 730L597 764L624 803L646 847L661 889L669 930L671 962L667 990L656 1009L632 1027L608 1035L583 1035L552 1027L518 1009L489 984L459 948L430 902L410 862L398 820z" fill="url(#glass)"/>
            <g class="watermark watermark-blue"><text x="845" y="678" class="wm-name">Ansys</text><text x="844" y="702" class="wm-rel">2025 R1</text></g>
            <path d="M298 1025Q304 1018 314 1019Q324 1018 331 1025L314 1036z" fill="#b9b9b9"/>
            <path d="M314 1034L300 1026" stroke="#d41616" stroke-width="4"/><path d="M314 1034L328 1026" stroke="#1414c4" stroke-width="4"/><path d="M314 1035V1015" stroke="#0c9a14" stroke-width="5"/>
            <path d="M296 1023l7 0-3 7z" fill="#7a1414"/><path d="M314 1012l6 5h-12z" fill="#12b01c"/><path d="M333 1023l-7-1 4 8z" fill="#10108c"/>
            <g class="axis"><text x="289" y="1021" fill="#f22020">X</text><text x="310" y="1009" fill="#28e028">Y</text><text x="330" y="1020" fill="#2828e0">Z</text></g>
          </svg>
        </section>

        <section class="window window-layout">
          <div class="titlebar"><svg class="title-icon"><use href="#lens-wire"/></svg><h2>1: 3D Layout</h2>
            <button aria-label="Menu"><svg><use href="#menu-down"/></svg></button><button aria-label="Minimize"><svg><use href="#minimize"/></svg></button><button aria-label="Maximize"><svg><use href="#maximize"/></svg></button><button aria-label="Close"><svg><use href="#close"/></svg></button></div>
          <div class="wintools">
            <div class="row">
              <button class="settings"><svg class="ring"><use href="#chev-d"/></svg>Settings</button>
              <i class="sep"></i>
              <button class="tb" aria-label="Refresh"><svg><use href="#refresh"/></svg></button>
              <button class="tb" aria-label="Copy"><svg><use href="#copy"/></svg></button>
              <button class="tb" aria-label="Save"><svg><use href="#save"/></svg></button>
              <button class="tb" aria-label="Print"><svg><use href="#print"/></svg></button>
              <i class="sep"></i>
              <button class="tb" aria-label="Draw"><svg><use href="#pencil"/></svg></button>
              <button class="tb" aria-label="Box"><svg><use href="#rect"/></svg></button>
              <button class="tb" aria-label="Arrow"><svg><use href="#arrow"/></svg></button>
              <button class="tb" aria-label="Line"><svg><use href="#line"/></svg></button>
              <button class="tb"><span class="glyph-a">A</span></button>
              <button class="tb" aria-label="Dimension"><svg><use href="#span"/></svg></button>
              <i class="sep"></i>
              <button class="tb tb-menu" aria-label="View"><svg><use href="#planes"/></svg><svg class="caret"><use href="#down"/></svg></button>
              <button class="tb on" aria-label="Axes"><svg><use href="#tripod"/></svg></button>
              <button class="tb on" aria-label="Rotate"><svg><use href="#rotate"/></svg></button>
              <button class="tb" aria-label="Pan"><svg><use href="#pan"/></svg></button>
              <button class="tb" aria-label="Zoom"><svg><use href="#magnify"/></svg></button>
              <button class="tb" aria-label="Reset"><svg><use href="#reset"/></svg></button>
              <i class="sep"></i>
              <button class="tb" aria-label="Lock"><svg><use href="#lock"/></svg></button>
              <i class="sep"></i>
              <button class="tb on" aria-label="Fit"><svg><use href="#fit"/></svg></button>
              <button class="tb" aria-label="Cascade"><svg><use href="#cascade"/></svg></button>
              <button class="tb" aria-label="Target"><svg><use href="#target"/></svg></button>
              <i class="sep"></i>
            </div>
            <div class="row row-wide">
              <button class="textmenu">Line Thickness<svg class="caret"><use href="#down"/></svg></button>
              <i class="sep"></i>
              <button class="tb" aria-label="Help"><svg><use href="#help"/></svg></button>
            </div>
          </div>
          <div class="plot">
            <svg class="plot-view" viewBox="1322 918 880 529">
              <g class="watermark watermark-dark"><text x="2169" y="1015" class="wm-name">Ansys</text><text x="2168" y="1050" class="wm-rel">2025 R1</text></g>
              <path d="M1366 1182L1740 1172V1192z" fill="#e6a000"/><path d="M2066 1172L2158 1179V1186L2066 1192z" fill="#e6a000"/>
              <g fill="none" stroke="#e6a000" stroke-width="2.300">
                <path d="M1366 1182L1976 1166L2004 1166L2158 1179"/><path d="M1366 1182L1976 1169L2004 1169L2158 1180"/><path d="M1366 1182L1976 1172L2004 1172L2158 1180"/><path d="M1366 1182L1976 1176L2004 1176L2158 1181"/><path d="M1366 1182L1976 1179L2004 1179L2158 1182"/><path d="M1366 1182H2158"/><path d="M1366 1182L1976 1186L2004 1186L2158 1183"/><path d="M1366 1182L1976 1189L2004 1189L2158 1183"/><path d="M1366 1182L1976 1192L2004 1192L2158 1184"/><path d="M1366 1182L1976 1195L2004 1195L2158 1185"/><path d="M1366 1182L1976 1198L2004 1198L2158 1186"/>
              </g>
              <g fill="none" stroke="#fff" stroke-width="3"><path d="M1971 1145V1219"/><path d="M1980 1144H1999Q2010 1182 1999 1220H1980Q1967 1182 1980 1144zM1978 1146V1218M2000 1146V1218M1973 1182H2003"/><path d="M2158 1178V1187"/></g>
              <path d="M1369 1373Q1392 1376 1394 1400H1369z" fill="#4a4a4a"/>
              <path d="M1368 1400H1400" stroke="#1c1cf0" stroke-width="5"/><circle cx="1368" cy="1402" r="4" fill="#e01c1c"/><path d="M1368 1400V1368" stroke="#20e020" stroke-width="4"/><path d="M1368 1364l5 6h-10z" fill="#129a12"/>
              <g class="axis axis-large"><text x="1362" y="1358" fill="#14c414">Y</text><text x="1404" y="1398" fill="#1818d8">Z</text></g>
              <path d="M1586 1434H1888" stroke="#ddd" stroke-width="3"/><path d="M1586 1428V1440M1888 1428V1440M1647 1431V1437M1707 1431V1437M1767 1431V1437M1828 1431V1437" stroke="#eee" stroke-width="2"/>
              <text x="1897" y="1440" class="scale">100 mm</text>
            </svg>
            <div class="plot-title">3D Layout</div>
            <div class="plot-info">
              <div class="plot-date">23/02/2026</div>
              <div class="plot-app">Zemax<br>Ansys Zemax OpticStudio 2024 R1.00</div>
              <div class="plot-file">LENS.zmx<br>Configuration 1 of 1</div>
            </div>
          </div>
          <div class="viewtabs">
            <svg class="viewtab-edge" viewBox="0 0 36 28"><path d="M0 0Q12 0 16 10Q20 27 28 27H36V0z" fill="#d3e3fa"/><path d="M0 0Q12 0 16 10Q20 27 28 27H36" fill="none" stroke="#888" stroke-width="2"/></svg>
            <button class="viewtab viewtab-active">Graph</button><button class="viewtab">Classic</button>
          </div>
        </section>
      </div>
    </section>
  </main>
</div>
</body>
</html>
```
FILE: styles.css
```css
* { box-sizing: border-box; }
body { margin: 0; min-height: 100vh; display: flex; flex-direction: column; overflow: hidden; background: #eee; color: #111; font: 17px/23px "Open Sans", "Noto Sans", sans-serif; }
button { font: inherit; color: inherit; background: none; border: 0; padding: 0; margin: 0; }
select { font: inherit; color: inherit; }
.defs { position: absolute; width: 0; height: 0; }

/* Ribbon */
.ribbon { display: flex; height: 19px; overflow: hidden; background: #e2e2e2; border-bottom: 2px solid #4f6473; flex: none; }
.ribbon-group { position: relative; display: flex; justify-content: center; align-items: flex-end; height: 16px; border-right: 3px solid #f8f8f8; color: #333; flex: none; white-space: nowrap; }
.ribbon-start { width: 64px; }
.ribbon-editors { width: 322px; }
.ribbon-viewers { width: 287px; }
.ribbon-diagnostics { width: 375px; }
.ribbon-window { width: 302px; }
.ribbon-config { width: 392px; }
.launcher { position: absolute; right: 9px; bottom: 4px; width: 11px; height: 11px; }

.workspace { display: flex; flex: 1; min-width: 0; }

/* Clipped panel at the left */
.explorer { position: relative; width: 19px; flex: none; border-right: 8px solid #808080; background: linear-gradient(#fafafa, #e2e2e2); }
.explorer-title { height: 34px; background: linear-gradient(#1d4596, #002a6c); }
.explorer-row { height: 29px; margin-top: 44px; background: #d5e4fb; border: solid #b9c4d4; border-width: 1px 0; }
.explorer-fields { display: grid; gap: 39px; padding: 44px 5px 0 0; }
.field { height: 34px; border: 2px solid #b0b0b0; border-left: 0; background: #fdfdfd; }
.field-dark { border-color: #7c7c7c; background: #ececec; }
.tooltip { position: absolute; z-index: 2; left: -2px; top: 832px; width: 88px; height: 125px; padding: 69px 19px 0 0; text-align: right; white-space: nowrap; background: #fff; border: 2px solid #6e6e6e; border-radius: 4px; box-shadow: 4px 4px 4px rgba(0, 0, 0, .35); }

.editors { flex: 1; min-width: 0; display: flex; flex-direction: column; }
.editor { display: flex; flex-direction: column; min-width: 0; }
.editor-lens { height: 425px; flex: none; border-bottom: 8px solid #808080; }
.editor-nsc { flex: 1; }

/* Document tabs */
.tabstrip { display: flex; align-items: flex-end; height: 39px; background: #dedede; border-bottom: 2px solid #a8a8a8; flex: none; }
.editor-nsc .tabstrip { height: 38px; }
.tab { display: flex; height: 33px; margin-bottom: -2px; }
.tab-edge { width: 32px; height: 33px; }
.tab-body { display: flex; align-items: center; height: 33px; padding: 0 11px 2px 6px; background: #fff; border: solid #a6a6a6; border-width: 2px 2px 0 0; white-space: nowrap; }
.tab-active .tab-body { background: #d5e4fb; padding-right: 10px; }
.tab-icon { width: 20px; height: 24px; margin-right: 9px; }
.tab-close { margin-left: 10px; height: 16px; color: #555; }
.tab-active .tab-close { margin-left: 6px; }
.tab-close svg { display: block; width: 16px; height: 16px; }

/* Toolbars */
.toolbar { display: flex; align-items: center; height: 47px; padding-top: 3px; background: #fff; border-bottom: 2px solid #a9a9a9; flex: none; }
.editor-lens .toolbar { border-top: 3px solid #c3d7f3; padding-top: 2px; }
.sep { width: 2px; height: 34px; background: #cfcfcf; margin-left: 3px; flex: none; }
.update { width: 205px; height: 34px; padding-left: 18px; display: flex; align-items: center; gap: 5px; white-space: nowrap; }
.caret { width: 10px; height: 10px; flex: none; }
.tb { width: 35px; height: 33px; display: flex; align-items: center; justify-content: center; flex: none; }
.tb svg { width: 24px; height: 24px; flex: none; }
.tb .caret { width: 10px; height: 10px; }
.toolbar .tb-menu { width: 52px; gap: 4px; }
.tb.on { border: 3px solid #fdb813; border-radius: 4px; background: #fdd48a; }
.tb.dim svg { opacity: .5; }
.tb.gray { color: #868686; }
.glyph-cad { font: bold 12px/24px "Open Sans", sans-serif; }
.glyph-z { width: 24px; font: bold 25px/24px "Open Sans", sans-serif; text-align: center; }
.glyph-a { font: bold 26px/24px "DejaVu Sans", sans-serif; }
.glyph-xy { font: 14px/24px "DejaVu Sans", sans-serif; }

/* Property bars */
.propbar { display: flex; align-items: center; height: 41px; padding: 0 0 3px 3px; background: linear-gradient(#dedede, #c9c9c9); font-weight: 700; white-space: nowrap; flex: none; overflow: hidden; }
.round { width: 36px; height: 36px; border: 2px solid #6f6f6f; border-radius: 50%; display: flex; align-items: center; justify-content: center; flex: none; color: #111; }
.round svg { width: 24px; height: 24px; }
.round:disabled { background: #f6f6f6; border-color: #b4b4b4; color: #ababab; }
.prop-kind { margin: 0 15px 0 6px; }
.prop-name { margin-right: 8px; }
.round + .round { margin-left: 4px; }
.config { display: flex; align-items: center; margin-left: auto; margin-right: 329px; }
.config span { margin-right: 10px; }
.config-cut { width: 32px; margin-right: 0; overflow: hidden; }

/* Data grids */
.grid-area { flex: 1; padding: 15px 0 0 6px; background: linear-gradient(#f9f9f9, #dcdcdc); overflow: hidden; }
.canvas { position: relative; background: linear-gradient(#fff, #fafafa 110px, #e0e0e0); }
.frame { display: inline-block; border: 2px solid #8a9fae; border-radius: 10px; overflow: hidden; vertical-align: top; }
.frame-cut { border-right: 0; border-radius: 10px 0 0 10px; }
.grid { table-layout: fixed; border-collapse: separate; border-spacing: 0; font-size: 19px; line-height: 26px; }
.grid-lens { width: 2333px; }
.grid-nsc { width: 2281px; }
.grid th, .grid td { padding: 0; height: 36px; white-space: nowrap; border: solid #c9c9c9; border-width: 0 2px 2px 0; background: #fff; }
.grid th { background: #dcdcdc; border-color: #a4a4a4; text-align: center; }
.grid thead th { height: 35px; border-bottom-width: 0; font-size: 20px; }
.grid tbody th { border-right-width: 0; padding-top: 2px; }
.grid tbody td { text-align: right; padding: 2px 3px 0 0; }
.grid tbody tr:last-child > * { border-bottom-width: 0; height: 34px; }
.grid .corner { background: linear-gradient(135deg, #cfcfcf 50%, #8a8a8a 50%) 10px 20px / 12px 12px no-repeat #cfcfcf; }
.grid-nsc tbody td { background: #d2d1fd; border-color: #c3c3d6; }
.grid tbody .solve { text-align: center; padding-right: 0; }
.grid tbody .word { text-align: left; padding: 2px 0 0 4px; }
.grid tbody .type { padding: 2px 0 0; }
.type div { display: flex; justify-content: space-between; align-items: center; padding: 0 6px 0 5px; }
.pick { position: relative; display: flex; }
.pick select { appearance: none; border: 0; padding: 0 21px 0 0; margin: 0; background: none; line-height: 26px; }
.pick::after { content: ""; position: absolute; right: 3px; top: 8px; border: solid transparent; border-width: 7px 5px 0; border-top-color: #a8a8a8; }
.grid .selected { background: #000; color: #fff; }

/* Floating windows */
.window { position: absolute; width: 900px; display: flex; flex-direction: column; border: 2px solid #a9a9a9; border-radius: 4px; background: linear-gradient(#fff, #e2e2e2); }
.window-object { left: 379px; top: 231px; padding-bottom: 6px; }
.window-layout { left: 1293px; top: 233px; }
.titlebar { display: flex; align-items: center; height: 33px; padding: 0 8px 0 9px; background: #fff; border-bottom: 2px solid #b4b4b4; border-radius: 3px 3px 0 0; color: #4c4c4c; }
.title-icon { width: 22px; height: 24px; }
.titlebar h2 { flex: 1; margin: 0 0 0 6px; font-size: 17px; line-height: 23px; font-weight: 400; color: #111; }
.titlebar button { width: 30px; height: 24px; display: flex; align-items: center; justify-content: center; }
.titlebar button svg { width: 15px; height: 15px; }
.wintools { padding: 4px 0 2px; background: #fcfcfc; }
.row { display: flex; align-items: center; height: 36px; white-space: nowrap; }
.row-second { padding-left: 6px; }
.row .sep { margin-right: 3px; }
.row .tb-menu { width: 51px; gap: 3px; }
.settings { width: 107px; padding-left: 9px; display: flex; align-items: center; gap: 5px; }
.ring { width: 24px; height: 24px; border: 2px solid #b0b0b0; border-radius: 50%; color: #777; flex: none; }
.textmenu { width: 148px; padding-left: 13px; display: flex; align-items: center; gap: 5px; }
.row-wide { padding-left: 3px; }
.solid { width: 74px; padding-left: 11px; }
.view3d { display: block; margin: 0 6px; aspect-ratio: 594 / 444; }
.watermark { font-family: Inter, sans-serif; font-weight: 700; text-anchor: end; }
.watermark-blue { fill: rgba(0, 10, 60, .16); }
.watermark-blue .wm-name { font-size: 36px; }
.watermark-blue .wm-rel { font-size: 18px; }
.watermark-dark { fill: #202020; }
.watermark-dark .wm-name { font-size: 54px; }
.watermark-dark .wm-rel { font-size: 26px; }
.axis { font: 13px "DejaVu Sans", sans-serif; }
.axis-large { font-size: 20px; }
.scale { font: 18px "Open Sans", sans-serif; fill: #ccc; }

.plot { margin: 0 6px 6px; border: 2px solid #fff; background: #000; color: #fff; font-family: "DejaVu Sans Mono", monospace; text-align: center; }
.plot-view { display: block; width: 100%; }
.plot-title { height: 26px; border: solid #fff; border-width: 2px 0; font-size: 14px; line-height: 22px; }
.plot-info { display: grid; grid-template: 66px 40px / 1fr 293px; }
.plot-date { grid-row: span 2; padding: 19px 17px; font-size: 14px; line-height: 18px; text-align: left; }
.plot-app { border: solid #fff; border-width: 0 0 2px 2px; padding-top: 18px; font-size: 12px; line-height: 14px; }
.plot-file { border-left: 2px solid #fff; padding-top: 4px; font-size: 15px; line-height: 17px; }
.viewtabs { display: flex; height: 32px; border-top: 2px solid #777; background: #ccc; }
.viewtab-edge { width: 36px; height: 28px; margin-left: 11px; }
.viewtab { height: 28px; width: 95px; background: #dedede; border: solid #888; border-width: 0 2px 2px 0; border-radius: 0 0 4px 4px; }
.viewtab-active { width: 72px; padding-right: 24px; background: #d3e3fa; border-radius: 0 0 4px 0; }
```
